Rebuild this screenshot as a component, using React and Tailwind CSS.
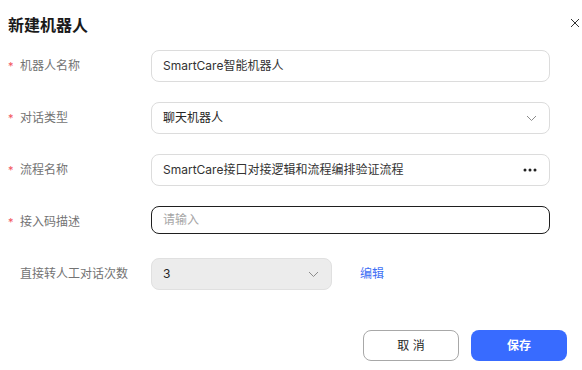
import React from "react";

const font = { fontFamily: '"Inter", "Noto Sans CJK SC", sans-serif' };

function Label({ text, required }) {
  return (
    <div className="flex w-[151px] shrink-0 items-center pl-[8px] text-[12px] text-[#737373]">
      <span className="w-[12px] text-[11px] leading-none text-[#f2555f]">{required ? "*" : ""}</span>
      <span>{text}</span>
    </div>
  );
}

function Chevron({ className }) {
  return (
    <svg className={className} width="11" height="7" viewBox="0 0 11 7" fill="none">
      <path d="M1 1L5.5 5.5L10 1" stroke="#8c8c8c" strokeWidth="1" />
    </svg>
  );
}

export default function App() {
  return (
    <div className="relative h-[370px] w-[582px] bg-white text-[#1f1f1f]" style={font}>
      <div className="flex h-[48px] items-center justify-between pl-[8px] pr-[2px] pt-[2px]">
        <div className="text-[16px] font-bold text-[#1a1a1a]">新建机器人</div>
        <svg width="10" height="10" viewBox="0 0 10 10" className="mt-[-4px]">
          <path d="M1 1L9 9M9 1L1 9" stroke="#333" strokeWidth="1" />
        </svg>
      </div>

      <div className="mt-[2px] flex flex-col gap-[20px]">
        <div className="flex h-[32px] items-center">
          <Label text="机器人名称" required />
          <div className="flex h-[32px] w-[399px] items-center rounded-[8px] border border-[#dcdcdc] px-[11px] text-[12px] text-[#333]">
            SmartCare智能机器人
          </div>
        </div>

        <div className="flex h-[32px] items-center">
          <Label text="对话类型" required />
          <div className="flex h-[32px] w-[399px] items-center justify-between rounded-[8px] border border-[#dcdcdc] pl-[11px] pr-[12px] text-[12px] text-[#262626]">
            <span>聊天机器人</span>
            <Chevron />
          </div>
        </div>

        <div className="flex h-[32px] items-center">
          <Label text="流程名称" required />
          <div className="flex h-[32px] w-[399px] items-center justify-between rounded-[8px] border border-[#dcdcdc] pl-[11px] pr-[12px] text-[12px] text-[#333]">
            <span>SmartCare接口对接逻辑和流程编排验证流程</span>
            <svg width="14" height="4" viewBox="0 0 14 4">
              <circle cx="2" cy="2" r="1.5" fill="#222" />
              <circle cx="7" cy="2" r="1.5" fill="#222" />
              <circle cx="12" cy="2" r="1.5" fill="#222" />
            </svg>
          </div>
        </div>

        <div className="flex h-[32px] items-center">
          <Label text="接入码描述" required />
          <div className="flex h-[28px] w-[399px] items-center self-start rounded-[8px] border border-[#1f1f1f] px-[11px] text-[12px] text-[#a6a6a6]">
            请输入
          </div>
        </div>

        <div className="flex h-[32px] items-center">
          <Label text="直接转人工对话次数" />
          <div className="flex h-[32px] w-[181px] items-center justify-between rounded-[8px] border border-[#e0e0e0] bg-[#ececec] pl-[11px] pr-[12px] text-[12px] text-[#262626]">
            <span>3</span>
            <Chevron />
          </div>
          <a className="ml-[28px] text-[12px] text-[#3e6ff5]">编辑</a>
        </div>
      </div>

      <div className="mt-[40px] flex justify-end gap-[12px] pr-[15px]">
        <button className="h-[31px] w-[96px] rounded-[8px] border border-[#a8a8a8] bg-white text-[12px] text-[#1f1f1f]">
          取 消
        </button>
        <button className="h-[31px] w-[96px] rounded-[8px] bg-[#386bff] text-[12px] font-bold text-white">
          保存
        </button>
      </div>
    </div>
  );
}
